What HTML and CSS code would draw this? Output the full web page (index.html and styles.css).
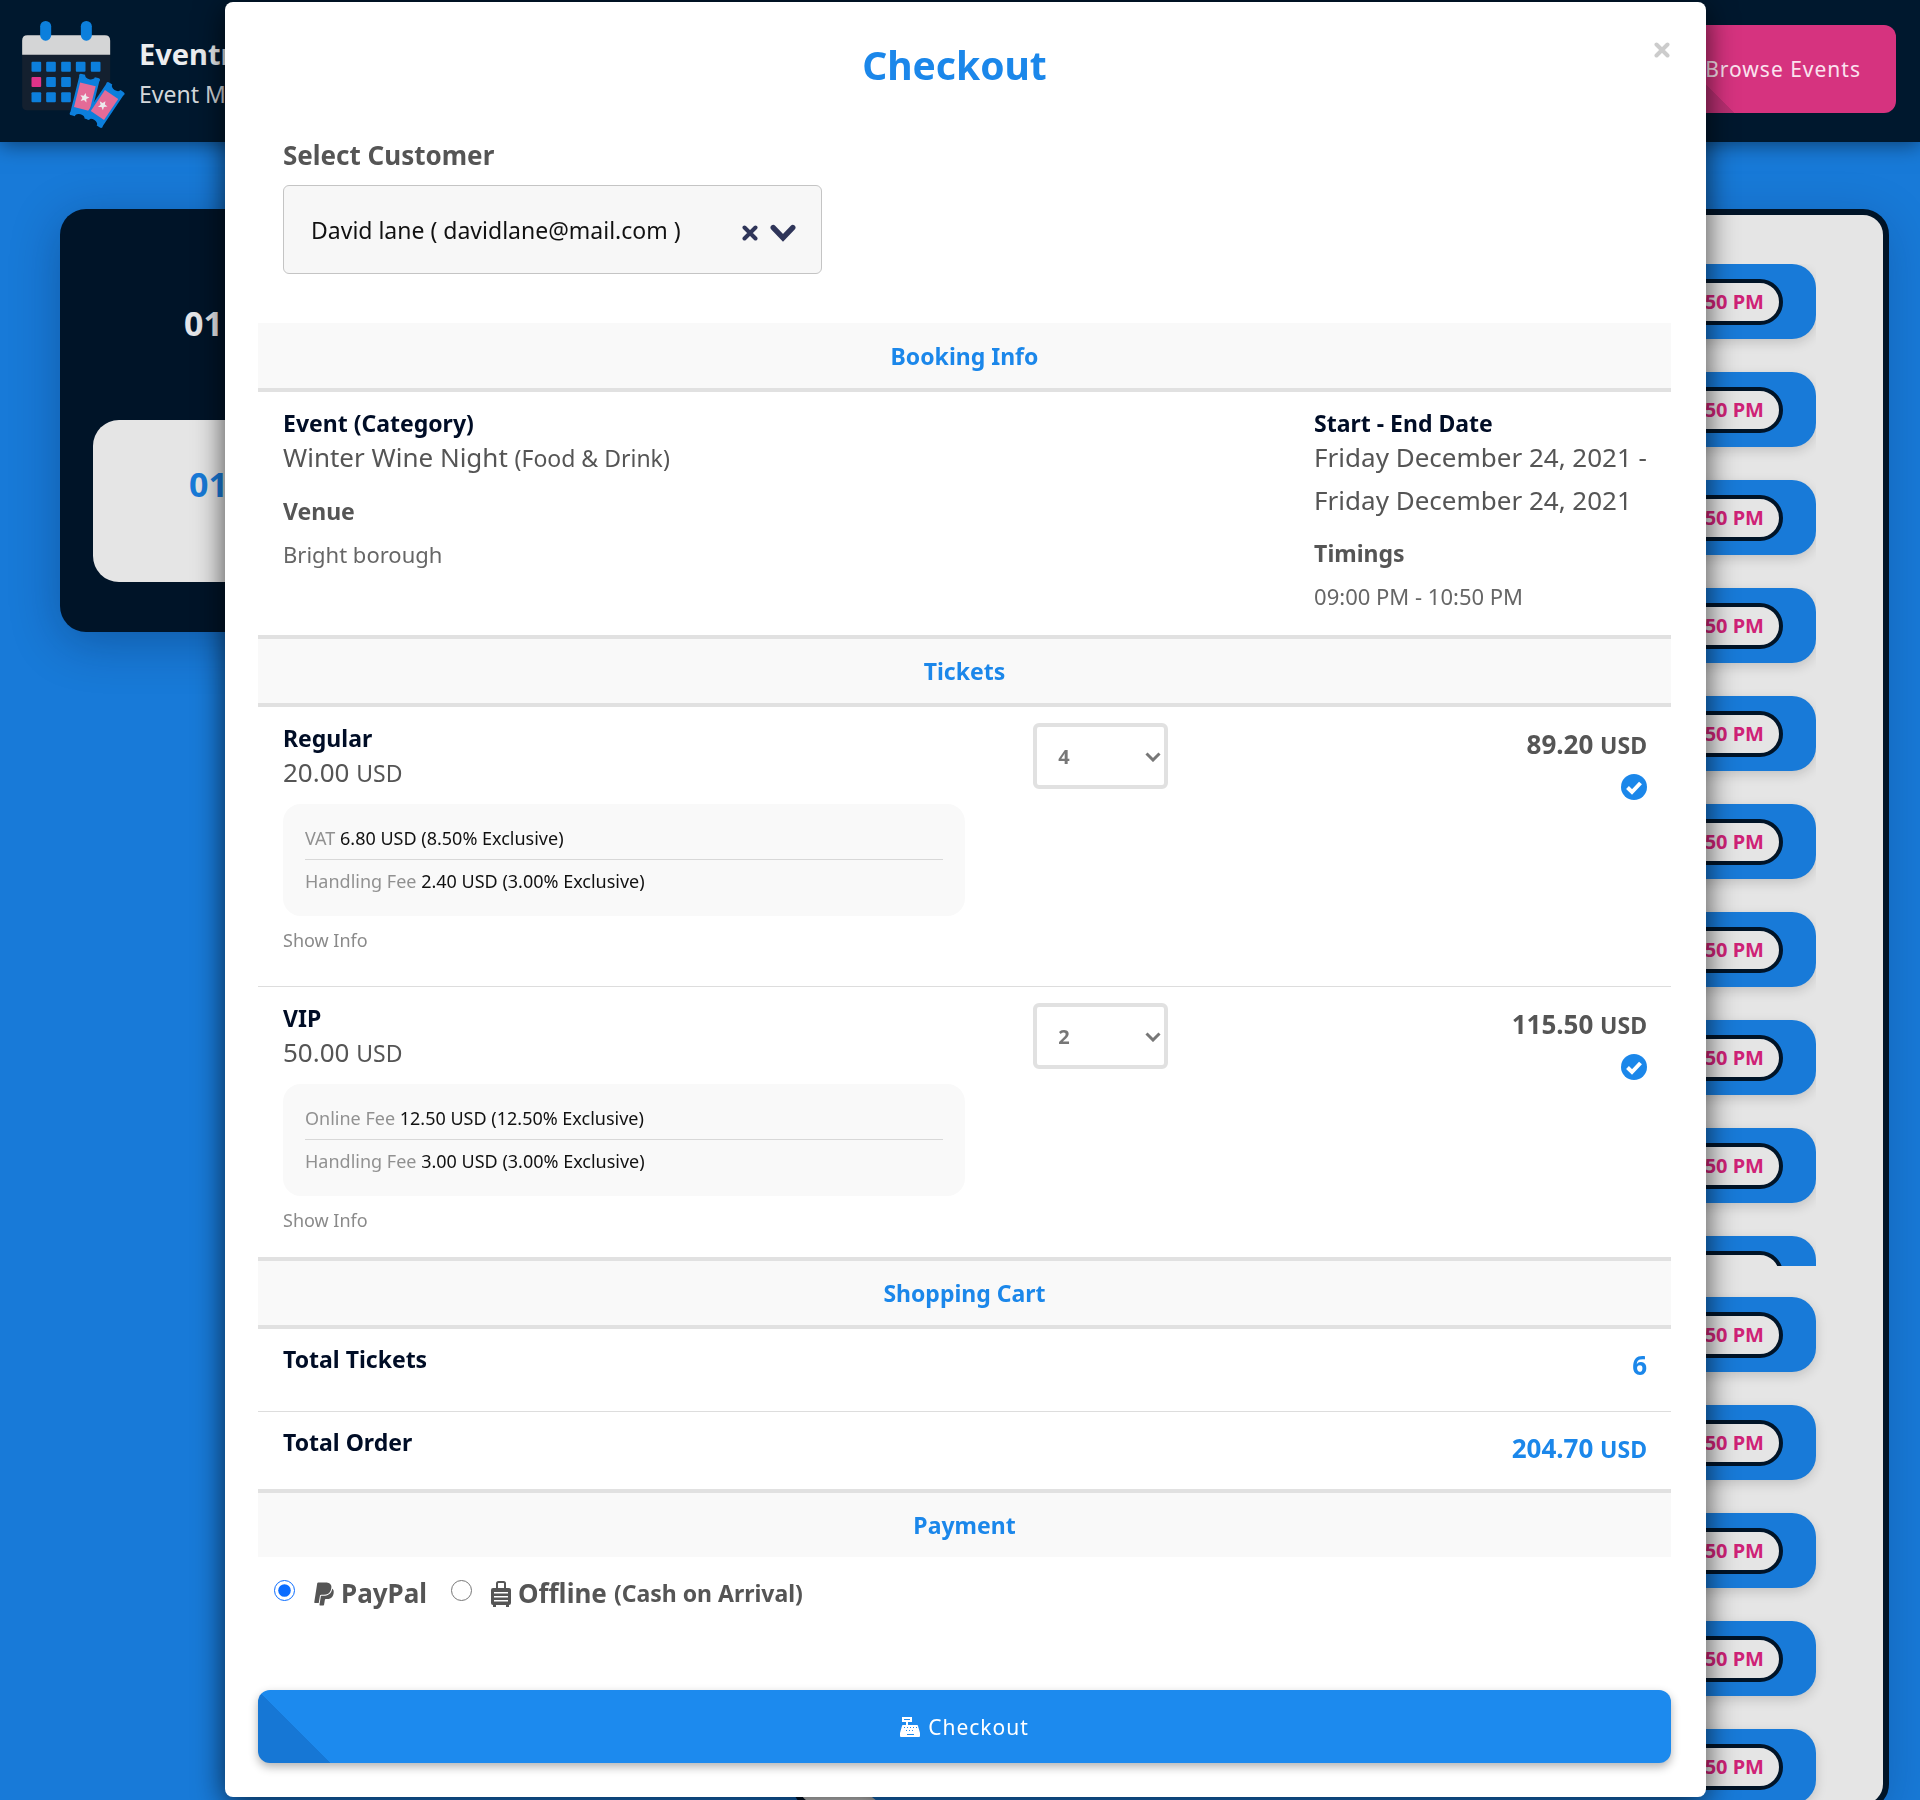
FILE: index.html
```html
<!DOCTYPE html>
<html lang="en">
<head>
<meta charset="utf-8">
<meta name="viewport" content="width=device-width, initial-scale=1">
<title>Checkout</title>
<link rel="stylesheet" href="styles.css">
</head>
<body>
<div class="page">
  <header class="topbar">
    <a class="brand" href="#">
      <svg class="brand-logo" viewBox="60 56 320 330" aria-hidden="true">
        <rect x="66" y="105" width="264" height="225" rx="14" fill="#14202f"/>
        <path d="M66 163v-42q0-16 16-16h232q16 0 16 16v42z" fill="#d4d5d6"/>
        <g fill="#0c7fdc">
          <rect x="120" y="62" width="33" height="59" rx="16"/>
          <rect x="242" y="62" width="33" height="59" rx="16"/>
          <rect x="94" y="184" width="29" height="30" rx="3"/>
          <rect x="138" y="184" width="29" height="30" rx="3"/>
          <rect x="183" y="184" width="29" height="30" rx="3"/>
          <rect x="227" y="184" width="29" height="30" rx="3"/>
          <rect x="272" y="184" width="29" height="30" rx="3"/>
          <rect x="138" y="230" width="29" height="30" rx="3"/>
          <rect x="183" y="230" width="29" height="30" rx="3"/>
          <rect x="94" y="276" width="29" height="30" rx="3"/>
          <rect x="138" y="276" width="29" height="30" rx="3"/>
          <rect x="183" y="276" width="29" height="30" rx="3"/>
        </g>
        <rect x="94" y="230" width="29" height="30" rx="3" fill="#e0338a"/>
        <g transform="translate(254 289) rotate(14)">
          <path d="M-31-54q-4-10 6-10h10a15 10 0 0 0 30 0h10q10 0 6 10v108q4 10-6 10h-10a15 10 0 0 0-30 0h-10q-10 0-6-10z" fill="#0c7fdc"/>
          <rect x="-24" y="-38" width="48" height="76" fill="#e46b97"/>
          <path d="M0-11l4 9 10 1-8 7 3 10-9-6-9 6 3-10-8-7 10-1z" fill="#eceaec"/>
        </g>
        <g transform="translate(313 314) rotate(34)">
          <path d="M-31-54q-4-10 6-10h10a15 10 0 0 0 30 0h10q10 0 6 10v108q4 10-6 10h-10a15 10 0 0 0-30 0h-10q-10 0-6-10z" fill="#0c7fdc"/>
          <rect x="-24" y="-38" width="48" height="76" fill="#e46b97"/>
          <path d="M-4-11l4 9 10 1-8 7 3 10-9-6-9 6 3-10-8-7 10-1z" fill="#eceaec"/>
        </g>
      </svg>
      <span class="brand-text">
        <span class="brand-name">Eventm</span>
        <span class="brand-tagline">Event M</span>
      </span>
    </a>
    <button class="browse" type="button">Browse Events</button>
  </header>
  <main class="board">
    <div class="dates">
      <div class="date">01</div>
      <div class="date date-active">01</div>
    </div>
    <div class="slots">
      <div class="slot-list slot-list-clipped">
        <div class="slot"><span class="slot-time">50 PM</span></div>
        <div class="slot"><span class="slot-time">50 PM</span></div>
        <div class="slot"><span class="slot-time">50 PM</span></div>
        <div class="slot"><span class="slot-time">50 PM</span></div>
        <div class="slot"><span class="slot-time">50 PM</span></div>
        <div class="slot"><span class="slot-time">50 PM</span></div>
        <div class="slot"><span class="slot-time">50 PM</span></div>
        <div class="slot"><span class="slot-time">50 PM</span></div>
        <div class="slot"><span class="slot-time">50 PM</span></div>
        <div class="slot"><span class="slot-time"></span></div>
      </div>
      <div class="slot-list">
        <div class="slot"><span class="slot-time">50 PM</span></div>
        <div class="slot"><span class="slot-time">50 PM</span></div>
        <div class="slot"><span class="slot-time">50 PM</span></div>
        <div class="slot"><span class="slot-time">50 PM</span></div>
        <div class="slot"><span class="slot-time">50 PM</span></div>
      </div>
    </div>
  </main>
</div>

<div class="overlay">
  <form class="modal" role="dialog" aria-labelledby="modal-title">
    <button class="close" type="button" aria-label="Close">
      <svg viewBox="0 0 16 16" aria-hidden="true"><path d="M2.500 2.500l11 11M13.500 2.500l-11 11"/></svg>
    </button>
    <h1 class="title" id="modal-title">Checkout</h1>

    <div class="customer">
      <label class="customer-label" for="customer">Select Customer</label>
      <div class="customer-field">
        <select class="customer-select" id="customer">
          <option>David lane ( davidlane@mail.com )</option>
        </select>
        <div class="customer-icons">
          <button class="clear" type="button" aria-label="Clear customer">
            <svg viewBox="0 0 16 16" aria-hidden="true"><path d="M2.500 2.500l11 11M13.500 2.500l-11 11"/></svg>
          </button>
          <svg class="chevron" viewBox="0 0 24 16" aria-hidden="true"><path d="M3 3L12 12.500L21 3"/></svg>
        </div>
      </div>
    </div>

    <section>
      <h2 class="bar bar-first">Booking Info</h2>
      <div class="booking">
        <div>
          <h3 class="name">Event (Category)</h3>
          <p class="big">Winter Wine Night <small>(Food &amp; Drink)</small></p>
          <h4 class="sub">Venue</h4>
          <p class="text">Bright borough</p>
        </div>
        <div>
          <h3 class="name">Start - End Date</h3>
          <p class="big">Friday December 24, 2021 -<br>Friday December 24, 2021</p>
          <h4 class="sub">Timings</h4>
          <p class="text">09:00 PM - 10:50 PM</p>
        </div>
      </div>
    </section>

    <section>
      <h2 class="bar">Tickets</h2>
      <div class="ticket">
        <div>
          <h3 class="name">Regular</h3>
          <p class="big">20.00 <small>USD</small></p>
          <ul class="fees">
            <li>VAT <span>6.80 USD (8.50% Exclusive)</span></li>
            <li>Handling Fee <span>2.40 USD (3.00% Exclusive)</span></li>
          </ul>
          <a class="info" href="#">Show Info</a>
        </div>
        <div class="quantity">
          <select class="quantity-select" aria-label="Regular quantity"><option>4</option></select>
          <svg class="quantity-arrow" viewBox="0 0 16 10" aria-hidden="true"><path d="M1.500 1.500L8 8L14.500 1.500"/></svg>
        </div>
        <div class="amount">
          <strong>89.20 <small>USD</small></strong>
          <svg class="check" viewBox="0 0 26 26" aria-hidden="true"><circle cx="13" cy="13" r="13"/><path d="M6.500 13.500l4.500 4.500l8.500-9"/></svg>
        </div>
      </div>
      <div class="ticket">
        <div>
          <h3 class="name">VIP</h3>
          <p class="big">50.00 <small>USD</small></p>
          <ul class="fees">
            <li>Online Fee <span>12.50 USD (12.50% Exclusive)</span></li>
            <li>Handling Fee <span>3.00 USD (3.00% Exclusive)</span></li>
          </ul>
          <a class="info" href="#">Show Info</a>
        </div>
        <div class="quantity">
          <select class="quantity-select" aria-label="VIP quantity"><option>2</option></select>
          <svg class="quantity-arrow" viewBox="0 0 16 10" aria-hidden="true"><path d="M1.500 1.500L8 8L14.500 1.500"/></svg>
        </div>
        <div class="amount">
          <strong>115.50 <small>USD</small></strong>
          <svg class="check" viewBox="0 0 26 26" aria-hidden="true"><circle cx="13" cy="13" r="13"/><path d="M6.500 13.500l4.500 4.500l8.500-9"/></svg>
        </div>
      </div>
    </section>

    <section>
      <h2 class="bar">Shopping Cart</h2>
      <div class="total">
        <h3 class="name">Total Tickets</h3>
        <strong class="total-value">6</strong>
      </div>
      <div class="total">
        <h3 class="name">Total Order</h3>
        <strong class="total-value">204.70 <small>USD</small></strong>
      </div>
    </section>

    <section>
      <h2 class="bar bar-last">Payment</h2>
      <div class="payment">
        <input class="radio" type="radio" name="payment" id="paypal" checked>
        <label class="method" for="paypal">
          <svg class="method-icon" viewBox="0 0 384 512" aria-hidden="true"><path d="M111.400 295.900c-3.500 19.200-17.400 108.700-21.500 134-.3 1.800-1 2.500-3 2.500H12.300c-7.600 0-13.100-6.600-12.100-13.900L58.800 46.600c1.500-9.600 10.100-16.900 20-16.900 152.300 0 165.100-3.700 204 11.400 60.100 23.300 65.600 79.500 44 140.300-21.500 62.600-72.500 89.500-140.100 90.300-43.400.7-69.500-7-75.300 24.200zM357.100 152c-1.800-1.300-2.500-1.800-3 1.300-2 11.400-5.100 22.500-8.800 33.600-39.900 113.800-150.500 103.900-204.500 103.900-6.100 0-10.100 3.300-10.900 9.400-22.600 140.400-27.100 169.700-27.100 169.700-1 7.100 3.500 12.900 10.600 12.900h63.500c8.600 0 15.700-6.300 17.400-14.900.7-5.400-1.100 6.100 14.400-91.300 4.600-22 14.300-19.700 29.300-19.700 71 0 126.400-28.800 142.900-112.300 6.500-34.800 4.600-71.400-23.800-92.600z"/></svg>
          PayPal
        </label>
        <input class="radio" type="radio" name="payment" id="offline">
        <label class="method" for="offline">
          <svg class="method-icon" viewBox="0 0 20 26" aria-hidden="true"><path d="M6 7V2.500Q6 1 7.500 1h5Q14 1 14 2.500V7" fill="none" stroke="currentColor" stroke-width="2"/><path fill-rule="evenodd" d="M2 7h16q2 0 2 2v13q0 2-2 2v2h-3v-2H5v2H2v-2q-2 0-2-2V9q0-2 2-2zM3 11v1.500h14V11zM3 15v1.500h14V15zM3 19v1.500h14V19z"/></svg>
          Offline <small>(Cash on Arrival)</small>
        </label>
      </div>
    </section>

    <button class="submit" type="submit">
      <svg class="register" viewBox="0 0 20 20" aria-hidden="true"><path fill-rule="evenodd" d="M2 0h10v5H8v3h9q1 0 1 1l2 7v3q0 1-1 1H1q-1 0-1-1v-3l2-7q0-1 1-1h3V5H2zM4 2v1h6V2zM4 10v1h1v-1zM7 10v1h1v-1zM10 10v1h1v-1zM13 10v1h1v-1zM16 10v1h1v-1zM6 13v1h1v-1zM9 13v1h1v-1zM12 13v1h1v-1zM7 17v1h7v-1z"/></svg>
      Checkout
    </button>
  </form>
</div>
</body>
</html>
```
FILE: styles.css
```css
* {
  box-sizing: border-box;
}

body {
  margin: 0;
  background: #187ad8;
  color: #555;
  font-family: "Noto Sans", "Open Sans", sans-serif;
  font-size: 23px;
}

h1, h2, h3, h4, p, ul {
  margin: 0;
  padding: 0;
}

button, select {
  font-family: inherit;
}

/* Page behind the dialog */
.page {
  height: 100vh;
  overflow: hidden;
}

.topbar {
  position: relative;
  display: flex;
  align-items: flex-start;
  justify-content: space-between;
  height: 142px;
  padding: 19px 24px 0 20px;
  background: #00182e;
  box-shadow: 0 2px 20px rgba(0, 0, 0, 0.5);
}

.brand {
  display: flex;
  align-items: center;
  gap: 12px;
  color: #d3d7da;
  text-decoration: none;
}

.brand-logo {
  width: 107px;
  height: 110px;
}

.brand-text {
  display: flex;
  flex-direction: column;
  line-height: 40px;
}

.brand-name {
  color: #eceef0;
  font-size: 29px;
  font-weight: 700;
}

.browse {
  height: 88px;
  margin-top: 6px;
  padding: 0 35px 0 58px;
  border: 0;
  border-radius: 12px;
  background: linear-gradient(to top right, #b92f72 50%, transparent 50%) left / 88px 100% no-repeat #d6337f;
  color: #fbe3ef;
  font-size: 21px;
  letter-spacing: 1px;
}

.board {
  display: flex;
  justify-content: space-between;
  align-items: flex-start;
  padding: 67px 31px 0 60px;
}

.dates {
  width: 25%;
  padding: 50px 33px;
  border-radius: 26px;
  background: #001428;
  box-shadow: 0 10px 50px rgba(0, 20, 50, 0.3);
  font-size: 34px;
  font-weight: 700;
}

.date {
  height: 161px;
  padding-left: 91px;
  color: #e5e5e8;
  line-height: 128px;
}

.date-active {
  height: 162px;
  padding-left: 96px;
  border-radius: 26px;
  background: #e5e5e5;
  color: #187ad8;
}

.slots {
  width: 60%;
  padding: 49px 67px 0;
  border: 6px solid #001428;
  border-radius: 26px;
  background: #e5e5e5;
  box-shadow: 0 10px 50px rgba(0, 20, 50, 0.2);
}

.slot-list {
  display: flex;
  flex-direction: column;
  gap: 33px;
}

.slot-list-clipped {
  height: 1002px;
  margin-bottom: 31px;
  overflow: hidden;
}

.slot {
  display: flex;
  flex: none;
  align-items: center;
  justify-content: flex-end;
  height: 75px;
  padding: 0 33px;
  border-radius: 24px;
  background: #187ad8;
  box-shadow: 0 4px 12px rgba(0, 0, 0, 0.15);
}

.slot-time {
  width: 160px;
  height: 46px;
  padding-right: 15px;
  border: 4px solid #001428;
  border-radius: 23px;
  background: #e5e5e5;
  color: #cf2277;
  font-size: 20px;
  font-weight: 700;
  line-height: 38px;
  text-align: right;
}

/* Dialog */
.overlay {
  position: fixed;
  inset: 0;
  padding: 2px 214px 2px 225px;
  overflow: hidden;
}

.modal {
  position: relative;
  padding: 33px 35px 34px 33px;
  border-radius: 8px;
  background: #fff;
  box-shadow: 0 6px 30px rgba(0, 0, 0, 0.7);
}

.close,
.clear {
  padding: 0;
  border: 0;
  background: none;
  line-height: 0;
}

.close {
  position: absolute;
  top: 40px;
  right: 36px;
}

.close svg,
.clear svg {
  width: 16px;
  height: 16px;
  fill: none;
  stroke: #ccc;
  stroke-width: 4;
  stroke-linecap: round;
}

.clear svg {
  stroke: #2f3559;
}

.title {
  padding-right: 20px;
  color: #1b87ea;
  font-size: 39px;
  line-height: 60px;
  text-align: center;
}

.customer {
  padding: 42px 25px 49px;
}

.customer-label {
  display: block;
  margin-bottom: 12px;
  font-size: 26px;
  font-weight: 700;
  line-height: 36px;
}

.customer-field {
  position: relative;
  width: 539px;
  max-width: 100%;
}

.customer-select {
  display: block;
  width: 100%;
  height: 89px;
  padding: 0 110px 0 27px;
  appearance: none;
  border: 1px solid #c4c4c4;
  border-radius: 6px;
  background: #f7f7f7;
  color: #111;
  font-size: 23px;
}

.customer-icons {
  position: absolute;
  top: 0;
  right: 26px;
  display: flex;
  align-items: center;
  gap: 12px;
  height: 95px;
}

.chevron {
  width: 26px;
  height: 18px;
  fill: none;
  stroke: #2f3559;
  stroke-width: 5;
  stroke-linecap: round;
}

.bar {
  border: solid #e1e1e1;
  border-width: 4px 0;
  background: #f9f9f9;
  color: #1b87ea;
  font-size: 23px;
  line-height: 64px;
  text-align: center;
}

.bar-first {
  padding-top: 1px;
  border-top: 0;
}

.bar-last {
  border-bottom: 0;
}

.name {
  padding-top: 3px;
  color: #000d26;
  font-size: 23px;
  line-height: 25px;
}

.big {
  font-size: 26px;
  line-height: 43px;
}

small {
  font-size: 23px;
}

.sub {
  margin-top: 10px;
  font-size: 23px;
  line-height: 43px;
}

.text {
  color: #666;
  font-size: 22px;
  line-height: 43px;
}

.booking {
  display: flex;
  justify-content: space-between;
  padding: 16px 24px 17px 25px;
}

.ticket {
  display: grid;
  grid-template-columns: 50% 135px 1fr;
  column-gap: 5%;
  padding: 16px 24px 31px 25px;
  border-bottom: 1px solid #ddd;
}

.ticket:last-child {
  padding-bottom: 22px;
  border-bottom: 0;
}

.fees {
  margin: 9px 0;
  padding: 13px 22px 14px;
  border-radius: 18px;
  background: #f9f9f9;
  color: #919191;
  font-size: 18px;
  line-height: 42px;
  list-style: none;
}

.fees li + li {
  border-top: 1px solid #d8d8d8;
}

.fees span {
  color: #111;
}

.info {
  display: block;
  color: #8a8a8a;
  font-size: 18px;
  line-height: 30px;
  text-decoration: none;
}

.quantity {
  position: relative;
}

.quantity-select {
  display: block;
  width: 100%;
  height: 66px;
  padding: 0 21px;
  appearance: none;
  border: 4px solid #e1e1e1;
  border-radius: 6px;
  background: #fff;
  color: #777;
  font-size: 20px;
  font-weight: 700;
}

.quantity-arrow {
  position: absolute;
  top: 29px;
  right: 7px;
  width: 16px;
  height: 10px;
  fill: none;
  stroke: #777;
  stroke-width: 3;
}

.amount {
  display: flex;
  flex-direction: column;
  align-items: flex-end;
  gap: 7px;
  font-size: 26px;
  line-height: 43px;
}

.check {
  width: 26px;
  height: 26px;
  fill: #1b87ea;
}

.check path {
  fill: none;
  stroke: #fff;
  stroke-width: 4;
}

.total {
  display: flex;
  justify-content: space-between;
  padding: 15px 24px 24px 25px;
  border-bottom: 1px solid #ddd;
}

.total:last-child {
  padding-bottom: 18px;
  border-bottom: 0;
}

.total-value {
  color: #1b87ea;
  font-size: 26px;
  line-height: 43px;
}

.payment {
  display: flex;
  align-items: center;
  padding: 15px 16px 75px;
}

.radio {
  width: 21px;
  height: 21px;
  margin: 0 19px 6px 0;
  accent-color: #0a6cff;
}

.method {
  display: flex;
  align-items: center;
  gap: 7px;
  margin-right: 24px;
  font-size: 26px;
  font-weight: 700;
  line-height: 43px;
}

.method-icon {
  width: 20px;
  height: 26px;
  fill: currentColor;
}

.submit {
  display: flex;
  align-items: center;
  justify-content: center;
  gap: 8px;
  width: 100%;
  height: 73px;
  border: 0;
  border-radius: 12px;
  background: linear-gradient(to top right, #1677d5 50%, transparent 50%) left / 73px 100% no-repeat #1c8aee;
  box-shadow: 0 4px 10px rgba(0, 0, 0, 0.3);
  color: #fff;
  font-size: 21px;
  letter-spacing: 1px;
}

.register {
  width: 20px;
  height: 20px;
  fill: currentColor;
}
```
